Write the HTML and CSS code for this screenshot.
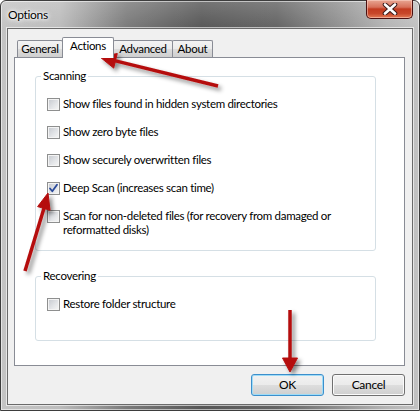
FILE: index.html
```html
<!DOCTYPE html>
<html>
<head>
<meta charset="utf-8">
<link rel="stylesheet" href="styles.css">
</head>
<body>
<div class="window">
  <div class="titlebar">
    <span class="title">Options</span>
    <div class="close">
      <svg width="18" height="12" viewBox="0 0 18 12">
        <path d="M4 1.5 L14 10.5 M14 1.5 L4 10.5" stroke="#3a1a1a" stroke-width="4.6" stroke-linecap="round"/>
        <path d="M4 1.5 L14 10.5 M14 1.5 L4 10.5" stroke="#ffffff" stroke-width="2.6" stroke-linecap="round"/>
      </svg>
    </div>
  </div>
  <div class="client">
    <div class="tabs">
      <div class="tab t-general">General</div>
      <div class="tab t-actions active">Actions</div>
      <div class="tab t-advanced">Advanced</div>
      <div class="tab t-about">About</div>
    </div>
    <div class="panel">
      <fieldset class="group scanning">
        <legend>Scanning</legend>
        <div class="row"><span class="cb"></span><span class="lbl">Show files found in hidden system directories</span></div>
        <div class="row"><span class="cb"></span><span class="lbl">Show zero byte files</span></div>
        <div class="row"><span class="cb"></span><span class="lbl">Show securely overwritten files</span></div>
        <div class="row"><span class="cb checked"><svg width="11" height="11" viewBox="0 0 11 11"><path d="M2 5.5 L4.3 8.3 L9 1.8" fill="none" stroke="#2a4a9a" stroke-width="1.8" stroke-linejoin="round" stroke-linecap="round"/></svg></span><span class="lbl">Deep Scan (increases scan time)</span></div>
        <div class="row"><span class="cb"></span><span class="lbl">Scan for non-deleted files (for recovery from damaged or<br>reformatted disks)</span></div>
      </fieldset>
      <fieldset class="group recovering">
        <legend>Recovering</legend>
        <div class="row"><span class="cb"></span><span class="lbl">Restore folder structure</span></div>
      </fieldset>
    </div>
    <div class="buttons">
      <div class="btn default">OK</div>
      <div class="btn">Cancel</div>
    </div>
  </div>
  <svg class="arrows" width="420" height="411" viewBox="0 0 420 411">
    <defs>
      <filter id="sh" x="-30%" y="-30%" width="160%" height="160%">
        <feDropShadow dx="3" dy="3" stdDeviation="2" flood-color="#000" flood-opacity="0.45"/>
      </filter>
    </defs>
    <g filter="url(#sh)" fill="#b50f0f" stroke="#b50f0f">
      <line x1="218" y1="86" x2="114.5" y2="60.6" stroke-width="3.5"/>
      <polygon points="100,57 117.3,53.5 113.7,68.1" stroke-width="1"/>
      <line x1="25" y1="271" x2="44.2" y2="207.4" stroke-width="3.5"/>
      <polygon points="48,193 50.0,210.2 37.6,206.6" stroke-width="1"/>
      <line x1="290" y1="310" x2="290" y2="359" stroke-width="3.5"/>
      <polygon points="290,372 282.5,358 297.5,358" stroke-width="1"/>
    </g>
  </svg>
</div>
</body>
</html>
```
FILE: styles.css
```css
* { box-sizing: border-box; }
html, body { margin: 0; padding: 0; }
body {
  width: 420px;
  height: 411px;
  overflow: hidden;
  font-family: "Segoe UI", Lato, "Open Sans", sans-serif;
  font-size: 11.5px;
  letter-spacing: -0.3px;
  color: #000;
  background: #fff;
}
.window {
  position: relative;
  width: 420px;
  height: 411px;
  border: 1px solid #3d3d3d;
  border-radius: 6px 6px 0 0;
  background:
    linear-gradient(to bottom, rgba(255,255,255,0.18), rgba(255,255,255,0) 28px),
    linear-gradient(to right, #c4c4c4 0%, #bcbcbc 14%, #7a7a7a 30%, #575757 48%, #646464 66%, #8e8e8e 80%, #b4b4b4 92%, #c2c2c2 100%);
  box-shadow: inset 0 0 0 1px rgba(255,255,255,0.55);
  display: flex;
  flex-direction: column;
}
.titlebar {
  height: 27px;
  display: flex;
  justify-content: space-between;
  align-items: flex-start;
}
.title {
  margin: 6px 0 0 7px;
  line-height: 16px;
  font-size: 12px;
  color: #000;
  text-shadow: 0 0 6px #fff, 0 0 4px #fff, 0 0 2px #fff;
}
.close {
  width: 47px;
  height: 19px;
  margin: -1px 6px 0 0;
  border: 1px solid #4a1010;
  border-top: none;
  border-radius: 0 0 5px 5px;
  background: linear-gradient(to bottom, #e8a693 0%, #d7705a 40%, #c23b20 50%, #c8472a 75%, #e27a55 100%);
  box-shadow: inset 0 0 0 1px rgba(255,220,210,0.5);
  display: flex;
  align-items: center;
  justify-content: center;
}
.close svg { display: block; }
.client {
  margin: 0 6px;
  height: 377px;
  background: #f0f0f0;
  border: 1px solid #6a6a6a;
  box-shadow: 0 0 0 1px rgba(255,255,255,0.6);
  padding: 8px 7px 0 6px;
}
.tabs {
  height: 20px;
  display: flex;
  align-items: flex-end;
  padding-left: 3px;
}
.tab {
  height: 17px;
  border: 1px solid #898c95;
  border-bottom: none;
  border-radius: 2px 2px 0 0;
  background: linear-gradient(to bottom, #f3f3f3 0%, #ebebeb 50%, #dddddd 51%, #cfcfcf 100%);
  text-align: center;
  line-height: 16px;
  margin-left: -1px;
  color: #000;
}
.t-general { width: 46px; margin-left: 0; }
.t-actions { width: 52px; }
.t-advanced { width: 60px; }
.t-about { width: 41px; }
.tab.active {
  height: 21px;
  margin-bottom: -1px;
  background: #fff;
  position: relative;
  z-index: 1;
  line-height: 16px;
}
.panel {
  width: 391px;
  height: 309px;
  background: #fff;
  border: 1px solid #898c95;
  padding: 10px 0 0 20px;
}
.group {
  width: 341px;
  margin: 0;
  border: 1px solid #d5dfe5;
  border-radius: 3px;
  padding: 13px 8px 13px 11px;
  min-width: 0;
}
.group legend {
  padding: 0 2px;
  margin-left: -6px;
  line-height: 16px;
  color: #000;
}
.recovering {
  margin-top: 17px;
  padding-bottom: 29px;
}
.row {
  display: flex;
  align-items: flex-start;
  line-height: 14px;
}
.row + .row { margin-top: 14px; }
.cb {
  flex: none;
  width: 13px;
  height: 13px;
  margin: 1px 3px 0 0;
  border: 1px solid #8e8f8f;
  background: linear-gradient(135deg, #c4c8ce 0%, #e2e4e7 55%, #f7f7f7 100%);
  box-shadow: inset 0 0 0 1px #f4f4f4;
  display: flex;
  align-items: center;
  justify-content: center;
}
.cb svg { display: block; }
.buttons {
  margin-top: 8px;
  display: flex;
  justify-content: flex-end;
  gap: 8px;
}
.btn {
  width: 73px;
  height: 22px;
  border: 1px solid #707070;
  border-radius: 3px;
  background: linear-gradient(to bottom, #f2f2f2 0%, #ebebeb 50%, #dddddd 51%, #cfcfcf 100%);
  box-shadow: inset 0 0 0 1px #fbfbfb;
  text-align: center;
  line-height: 20px;
  font-size: 12px;
  color: #000;
}
.btn.default {
  border-color: #3c8fcc;
  box-shadow: inset 0 0 0 1px #9fdcf7;
}
.arrows {
  position: absolute;
  left: -1px;
  top: -1px;
  pointer-events: none;
}
```
